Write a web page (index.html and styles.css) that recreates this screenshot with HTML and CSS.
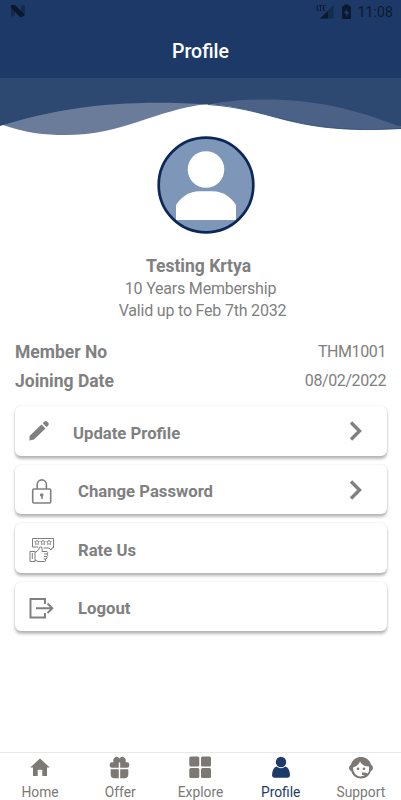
FILE: index.html
```html
<!DOCTYPE html>
<html lang="en">
<head>
<meta charset="utf-8">
<title>Profile</title>
<link rel="stylesheet" href="styles.css">
</head>
<body>
<div class="screen">
  <header class="header">
    <div class="status">
      <svg class="brand" width="16" height="14" viewBox="0 0 16 14"><path fill="#142b4f" d="M1 2 5 5V11L1 13zM11 2 15 1V11L11 9z"/><path fill="#0b192d" d="M1 1H5L15 11 12 13H10L1 4z"/></svg>
      <div class="status-right">
        <svg width="18" height="16" viewBox="0 0 18 16"><path fill="#142b50" d="M17.500 1V14.500H4z"/><path fill="#0b192d" d="M12 7V14.500H4z"/><path fill="none" stroke="#0b192d" stroke-width=".9" d="M1.300 1V6.500H3M3 1.500H6.200M4.600 1.500V7M9.500 1.500H7.500V6.500H9.500M7.500 4H9"/></svg>
        <svg class="battery" width="11" height="16" viewBox="0 0 10 16"><path fill="#0b192d" d="M3 .5H7V2H8Q9.500 2 9.500 3V14Q9.500 15 8 15H2Q.5 15 .5 14V3Q.5 2 2 2H3z"/><path fill="#1d3a6a" d="M5.700 4.500 2.500 9.200H4.500V13L7.600 8H5.700z"/></svg>
        <span class="time">11:08</span>
      </div>
    </div>
    <h1 class="title">Profile</h1>
  </header>
  <svg class="wave" width="401" height="58" viewBox="0 78 401 58">
    <path fill="#6b7c9b" d="M0 124C25 133 45 135 65 135C125 135 153 110 208 104L170 99L80 104z"/>
    <path fill="#4c6186" d="M208 104C225 98 245 96 265 96C315 96 360 108 401 124V128.500C385 129.500 372 129.700 360 129.500C285 128 269 109 208 104z"/>
    <path fill="#2d4871" d="M0 78H401V127C355 109 315 99.500 265 99.500C240 99.500 225 101.500 208 104.500C125 99 60 107 0 126z"/>
    <path fill="#4c6186" d="M401 126V128.500H385z"/>
    <path fill="none" stroke="#1d426f" stroke-width=".8" d="M208 104.500C269 109 285 128 360 129.500C372 129.700 385 129.500 401 128.500"/>
  </svg>
  <main class="main">
    <svg class="avatar" width="98" height="98" viewBox="0 0 98 98"><circle cx="49" cy="49" r="47.300" fill="#7e96b8" stroke="#0b2859" stroke-width="2.700"/><circle cx="49" cy="33.500" r="18.300" fill="#fff"/><path fill="#fff" d="M19 84V69C25 60 33 55.300 42 55.300H56C65 55.300 73 60 79 69V84z"/></svg>
    <div class="person">
      <div class="name">Testing Krtya</div>
      <div class="plan">10 Years Membership</div>
      <div class="valid">Valid up to Feb 7th 2032</div>
    </div>
    <dl class="facts">
      <div class="fact"><dt>Member No</dt><dd>THM1001</dd></div>
      <div class="fact"><dt>Joining Date</dt><dd>08/02/2022</dd></div>
    </dl>
    <div class="cards">
      <div class="card update">
        <svg class="icon" width="28" height="28" viewBox="0 0 28 28"><path fill="#808080" d="M2.500 23.500V19L14.500 7.500 18.500 11.500 7 22.500zM15.700 6.300 18 4.300Q19 3.500 20 4.500L21.500 6Q22.300 7 21.500 8L19.700 10.200z"/></svg>
        <span class="label">Update Profile</span>
        <svg class="chev" width="14" height="20" viewBox="0 0 14 20"><path fill="none" stroke="#808080" stroke-width="3.400" d="M2 1.500 10.500 10 2 18.500"/></svg>
      </div>
      <div class="card lower">
        <svg class="icon" width="28" height="28" viewBox="0 0 28 28"><rect x="5.700" y="11" width="18" height="14" rx="1.300" fill="none" stroke="#808080" stroke-width="1.600"/><path fill="none" stroke="#808080" stroke-width="1.600" d="M10.200 11V6.500A4.600 4.600 0 0 1 19.400 6.500V11"/><circle cx="14.700" cy="17" r="1.800" fill="#808080"/><path stroke="#808080" stroke-width="1.500" d="M15 17V21"/></svg>
        <span class="label">Change Password</span>
        <svg class="chev" width="14" height="20" viewBox="0 0 14 20"><path fill="none" stroke="#808080" stroke-width="3.400" d="M2 1.500 10.500 10 2 18.500"/></svg>
      </div>
      <div class="card lower">
        <svg class="icon" width="28" height="28" viewBox="0 0 28 28" fill="none" stroke="#777" stroke-width=".95"><path d="M5.500 11V2.500H26.500V12H25L24 14 22 12H16.500M5.500 11H11"/><path stroke-width=".75" d="m10 4 .7 1.500 1.700.2-1.200 1.200.3 1.700L10 7.700l-1.500.9.3-1.700-1.200-1.200 1.700-.2zM16 4l.7 1.500 1.700.2-1.200 1.200.3 1.700-1.500-.9-1.500.9.3-1.700-1.200-1.200 1.700-.2zM22 4l.7 1.500 1.700.2-1.200 1.200.3 1.700-1.500-.9-1.500.9.3-1.700-1.200-1.200 1.700-.2z"/><path d="M3 15.500H8V25.500H3zM5.300 17V23M8 16.500 11.500 14 12.500 11Q15.500 10 15.200 13L15 15.500H20Q21.500 16.500 20 18H17M20 18Q21.500 19.500 20 20.500H17M19.500 20.500Q21 22 19 23H16.500M18.500 23Q19.500 25 17.500 25.500H11L8 24"/></svg>
        <span class="label">Rate Us</span>
      </div>
      <div class="card lower">
        <svg class="icon" width="28" height="28" viewBox="0 0 28 28" fill="none" stroke="#808080" stroke-width="2"><path d="M18 9V4H3.500V22.500H18V18M9 13.300H25.500M20.500 8.500 25.300 13.300 20.500 18.100"/></svg>
        <span class="label">Logout</span>
      </div>
    </div>
  </main>
  <nav class="nav">
    <div class="tab"><svg width="26" height="26" viewBox="0 0 26 26"><path fill="#7c7974" d="M13 3.500 22.800 12.500H20V21H15.300V14.700H10.700V21H6V12.500H3.200z"/></svg><span>Home</span></div>
    <div class="tab"><svg width="26" height="26" viewBox="0 0 26 26"><path fill="#7c7974" fill-rule="evenodd" d="M2.700 9.500Q2.700 7.300 5 7.300H6.500Q5.800 5 6.800 3.500Q8.500 1 11 2L12.500 3.500 14 2Q16.500 1 18.200 3.500Q19.200 5 18.500 7.300H20Q22.300 7.300 22.300 9.500V10.500Q22.300 12.800 20 12.800H13.200V7.500H11.800V12.800H5Q2.700 12.800 2.700 10.500zM3.700 14.300H11.800V23.300H7.500Q3.700 23.300 3.700 19.500zM13.200 14.300H21.300V19.500Q21.300 23.300 17.500 23.300H13.200z"/></svg><span>Offer</span></div>
    <div class="tab"><svg width="26" height="26" viewBox="0 0 26 26" fill="#7c7974"><rect x="2.300" y="1.500" width="10" height="10" rx="1.500"/><rect x="14" y="1.500" width="10" height="10" rx="1.500"/><rect x="2.300" y="13" width="10" height="10" rx="1.500"/><rect x="14" y="13" width="10" height="10" rx="1.500"/></svg><span>Explore</span></div>
    <div class="tab active"><svg width="26" height="26" viewBox="0 0 26 26" fill="#1d3a6b"><circle cx="13" cy="7" r="5.200"/><path d="M8.500 11.500Q13 15 17.500 11.500Q21.500 13 21.900 19V21Q21.500 22.800 19.500 22.800H6.500Q4.500 22.800 4.100 21V19Q4.500 13 8.500 11.500z"/></svg><span>Profile</span></div>
    <div class="tab"><svg width="26" height="26" viewBox="0 0 26 26"><path fill="#7c7974" d="M3 9.500C4.500 4.500 8.500 2 13 2S21.500 4.500 23 9.500Q25 10.500 25 13T22.500 16.500C21.500 20.500 18 23.500 13 23.500S4.500 20.500 3.500 16.500Q1 15.500 1 13T3 9.500z"/><path fill="#fff" d="M5 12.500Q10.500 10.500 12 6.500Q15 11.500 21 11.500V15.500Q20.700 17.500 19.500 18.500L17 17.500H14V20H17Q13 22.500 9 20.500Q5 18 5 12.500z"/><circle cx="10" cy="13.800" r="1.300" fill="#7c7974"/><circle cx="16" cy="13.800" r="1.300" fill="#7c7974"/></svg><span>Support</span></div>
  </nav>
</div>
</body>
</html>
```
FILE: styles.css
```css
* { box-sizing: border-box; }
body { margin: 0; background: #fff; color: #808080; font-family: Roboto, sans-serif; }
svg { display: block; flex: none; }
.screen { width: 401px; height: 800px; display: flex; flex-direction: column; overflow: hidden; }
.header { height: 78px; flex: none; background: #1d3967; }
.status { height: 26px; padding: 4px 8px 0 10px; display: flex; justify-content: space-between; align-items: flex-start; }
.status-right { display: flex; }
.battery { margin-left: 7px; }
.time { margin-left: 6px; font-size: 14px; line-height: 17px; color: #0c1a30; letter-spacing: .1px; }
.title { margin: 13px 0 0; text-align: center; font-size: 19.500px; line-height: 25px; font-weight: 500; color: #fff; }
.wave { flex: none; }
.main { flex: 1; min-height: 0; }
.avatar { margin: 0 auto 0 156.500px; }
.person { margin-top: 20px; display: flex; flex-direction: column; align-items: center; font-size: 16px; letter-spacing: -.2px; line-height: 21.500px; }
.name { font-size: 17.500px; letter-spacing: 0; font-weight: 700; line-height: 24px; margin-right: 4px; }
.valid { margin-left: 4px; }
.facts { margin: 16px 15px 0; }
.fact { display: flex; justify-content: space-between; align-items: center; height: 29px; }
.fact dt { font-size: 17.500px; font-weight: 700; }
.fact dd { margin: 0; font-size: 16px; letter-spacing: -.4px; }
.cards { margin: 11px 14px 0 15px; display: flex; flex-direction: column; gap: 9px; }
.card { height: 49.500px; border-radius: 6px; background: #fff; display: flex; align-items: center; padding: 0 24px 0 12px; box-shadow: 0 2.500px 3px rgba(0,0,0,.27), 0 0 2px rgba(0,0,0,.1); }
.lower .icon { margin-top: 5px; }
.lower .chev { margin-top: 1px; }
.label { margin: 6px 0 0 23px; font-size: 16.700px; line-height: 20px; font-weight: 700; }
.update .label { margin-left: 18px; }
.card .chev { margin-left: auto; }
.nav { height: 48px; flex: none; display: grid; grid-template-columns: repeat(5, 1fr); border-top: 1px solid #e8e8e8; }
.tab { display: flex; flex-direction: column; align-items: center; padding-top: 2px; font-size: 13.800px; line-height: 18px; color: #7c7974; }
.tab span { margin-top: 2px; }
.active { color: #1d3a6b; }
```
